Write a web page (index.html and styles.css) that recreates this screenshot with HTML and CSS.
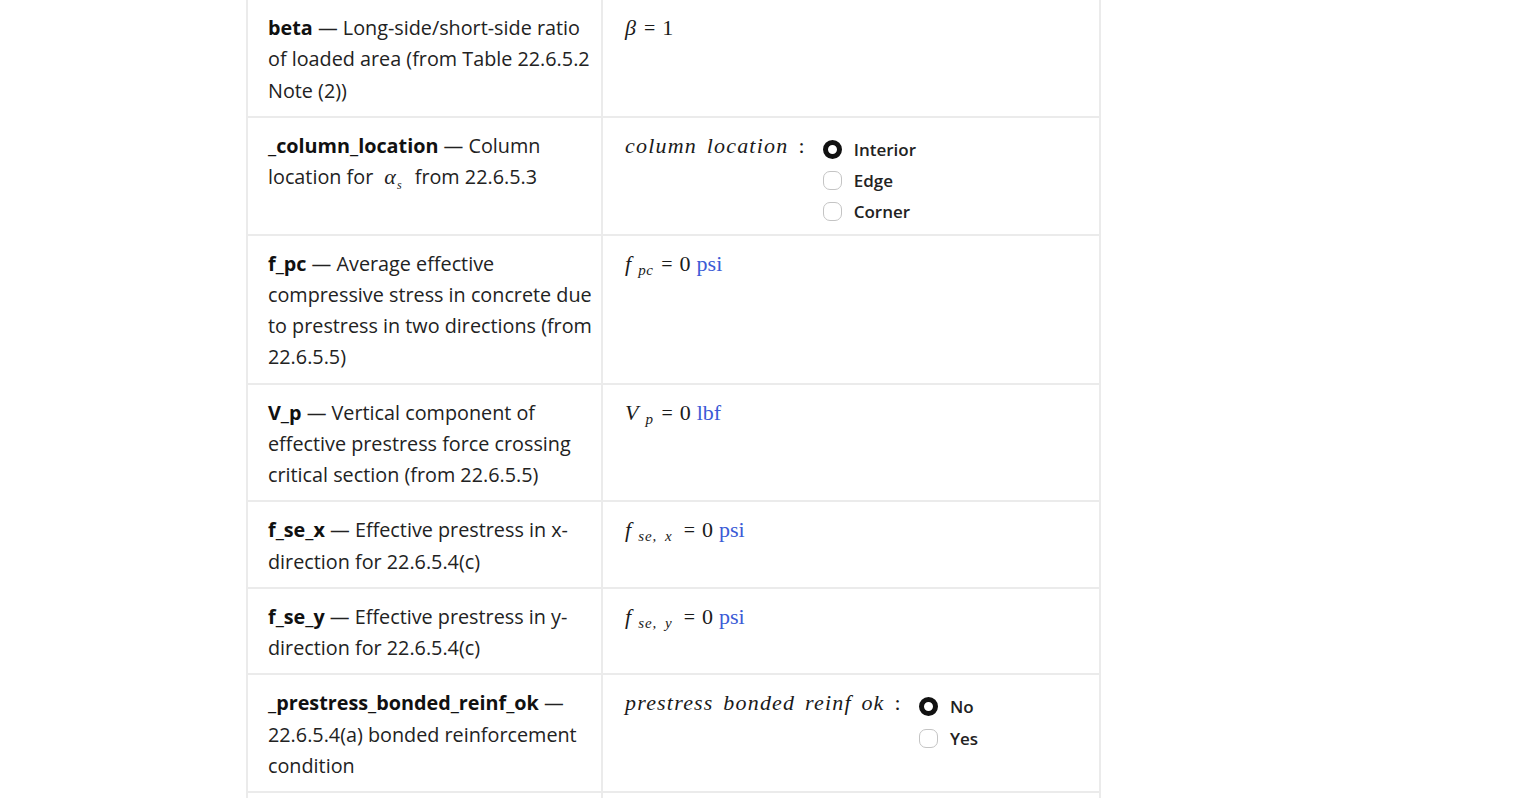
FILE: index.html
```html
<!DOCTYPE html>
<html>
<head>
<meta charset="utf-8">
<link rel="stylesheet" href="styles.css">
</head>
<body>
<div class="page">
  <div class="table">
    <div class="row first">
      <div class="cell desc"><b>beta</b> — Long-side/short-side ratio of loaded area (from Table 22.6.5.2 Note (2))</div>
      <div class="cell val"><span class="math"><i class="mi">β</i><span class="eq">=</span><span class="num">1</span></span></div>
    </div>
    <div class="row">
      <div class="cell desc"><b>_column_location</b> — Column location for <span class="inl"><i>α</i><sub>s</sub></span> from 22.6.5.3</div>
      <div class="cell val choice">
        <span class="math word">column location<span class="colon">:</span></span>
        <div class="radios">
          <label class="opt"><span class="radio on"></span>Interior</label>
          <label class="opt"><span class="radio"></span>Edge</label>
          <label class="opt"><span class="radio"></span>Corner</label>
        </div>
      </div>
    </div>
    <div class="row">
      <div class="cell desc"><b>f_pc</b> — Average effective compressive stress in concrete due to prestress in two directions (from 22.6.5.5)</div>
      <div class="cell val"><span class="math"><i class="mi">f</i><sub class="sb">pc</sub><span class="eq">=</span><span class="num">0</span><span class="unit">psi</span></span></div>
    </div>
    <div class="row">
      <div class="cell desc"><b>V_p</b> — Vertical component of effective prestress force crossing critical section (from 22.6.5.5)</div>
      <div class="cell val"><span class="math"><i class="mi">V</i><sub class="sb">p</sub><span class="eq">=</span><span class="num">0</span><span class="unit">lbf</span></span></div>
    </div>
    <div class="row">
      <div class="cell desc"><b>f_se_x</b> — Effective prestress in x-direction for 22.6.5.4(c)</div>
      <div class="cell val"><span class="math"><i class="mi">f</i><sub class="sb wide">se, x</sub><span class="eq">=</span><span class="num">0</span><span class="unit">psi</span></span></div>
    </div>
    <div class="row">
      <div class="cell desc"><b>f_se_y</b> — Effective prestress in y-direction for 22.6.5.4(c)</div>
      <div class="cell val"><span class="math"><i class="mi">f</i><sub class="sb wide">se, y</sub><span class="eq">=</span><span class="num">0</span><span class="unit">psi</span></span></div>
    </div>
    <div class="row">
      <div class="cell desc"><b>_prestress_bonded_reinf_ok</b> — 22.6.5.4(a) bonded reinforcement condition</div>
      <div class="cell val choice">
        <span class="math word">prestress bonded reinf ok<span class="colon">:</span></span>
        <div class="radios">
          <label class="opt"><span class="radio on"></span>No</label>
          <label class="opt"><span class="radio"></span>Yes</label>
        </div>
      </div>
    </div>
    <div class="row">
      <div class="cell desc">&nbsp;</div>
      <div class="cell val">&nbsp;</div>
    </div>
  </div>
</div>
</body>
</html>
```
FILE: styles.css
```css
html, body {
  margin: 0;
  padding: 0;
  background: #ffffff;
}
body {
  font-family: "Open Sans", "Noto Sans", sans-serif;
  color: #222222;
  overflow: hidden;
  height: 798px;
}
.page {
  padding-left: 246px;
}
.table {
  box-sizing: border-box;
  width: 855px;
  border-left: 2px solid #ebebeb;
  border-right: 2px solid #ebebeb;
}
.row {
  display: grid;
  grid-template-columns: 355px 1fr;
  border-top: 2px solid #ebebeb;
}
.row.first {
  border-top: none;
}
.cell {
  padding: 12px 8px 10px 20px;
  font-size: 19.8px;
  line-height: 31.25px;
}
.desc {
  border-right: 2px solid #ebebeb;
}
.desc b {
  font-weight: 700;
  color: #111;
}
.val {
  padding-left: 22px;
}
.math {
  font-family: "Liberation Serif", "DejaVu Serif", serif;
  font-size: 22px;
  color: #1a1a1a;
}
.mi {
  font-style: italic;
}
.eq {
  margin: 0 7px 0 8px;
  font-size: 20px;
}
.sb {
  font-style: italic;
  font-size: 15px;
  margin-left: 7px;
  vertical-align: -4px;
  line-height: 0;
  letter-spacing: 0.5px;
}
.sb.wide {
  word-spacing: 3px;
  letter-spacing: 1px;
  margin-right: 3px;
}
.unit {
  color: #3b5bd6;
  margin-left: 6px;
}
.inl {
  font-family: "Liberation Serif", serif;
  font-size: 22px;
  margin: 0 8px 0 6px;
}
.inl i {
  font-style: italic;
}
.inl sub {
  font-size: 12px;
  font-style: italic;
  line-height: 0;
  margin-left: 1px;
}
.choice {
  display: flex;
  align-items: flex-start;
}
.word {
  font-style: italic;
  letter-spacing: 1.2px;
  word-spacing: 3px;
}
.colon {
  font-style: normal;
  margin-left: 10px;
}
.radios {
  display: flex;
  flex-direction: column;
  margin-left: 17px;
  margin-top: 4px;
  margin-bottom: -4px;
}
.opt {
  display: flex;
  align-items: center;
  height: 31.25px;
  font-size: 17px;
  font-weight: 600;
  color: #222;
}
.radio {
  width: 19px;
  height: 19px;
  box-sizing: border-box;
  border: 1.5px solid #c4c4c4;
  border-radius: 7px;
  margin-right: 12px;
  background: #fff;
}
.radio.on {
  border: 5px solid #111;
  border-radius: 50%;
}
```
